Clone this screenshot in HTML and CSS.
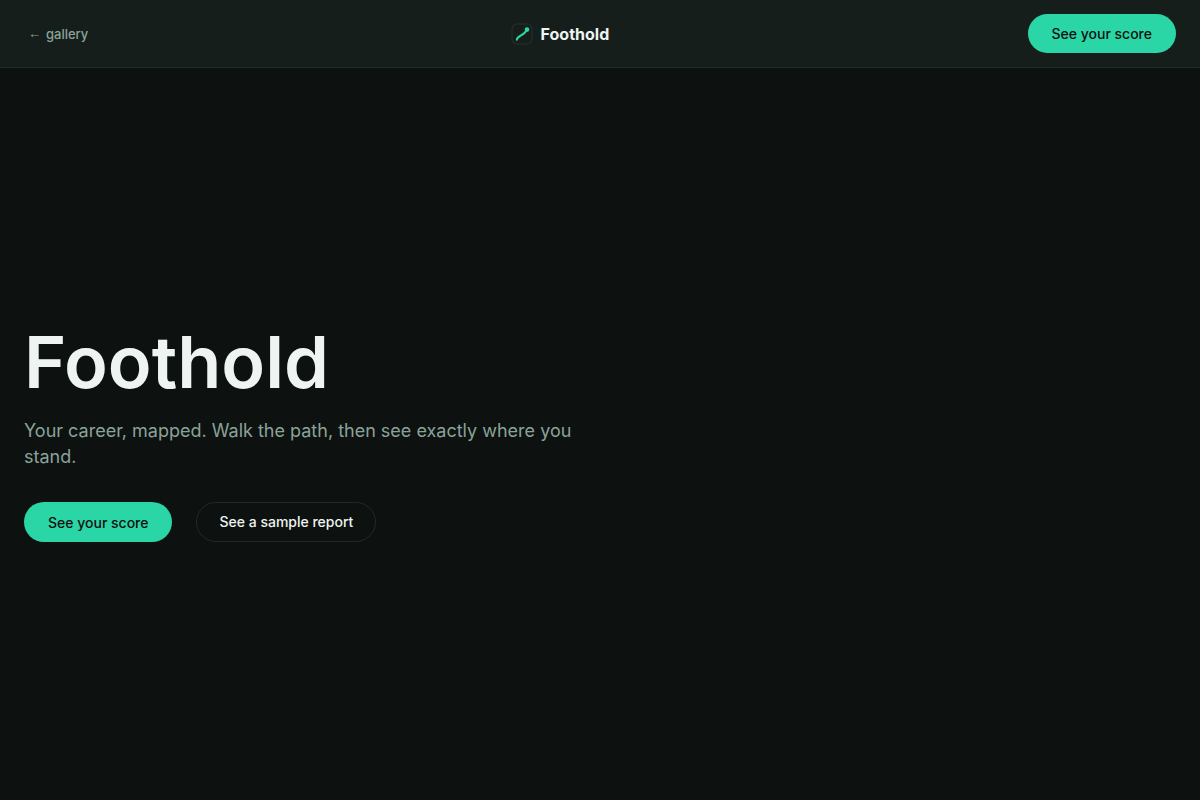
FILE: index.html
```
<!DOCTYPE html>
<html lang="en">
<head>
    <meta charset="UTF-8">
    <meta name="viewport" content="width=device-width, initial-scale=1.0">
    <title>Foothold</title>
    <link rel="stylesheet" href="styles.css">
</head>
<body>
    <header class="site-header">
        <a class="back-link" href="#gallery"><span class="back-arrow">←</span> gallery</a>
        <a class="brand" href="#top">
            <svg class="brand-mark" viewBox="0 0 22 22" fill="none" aria-hidden="true">
                <rect x="1" y="1" width="20" height="20" rx="5" stroke="#202b27" stroke-width="1.5"/>
                <path d="M5.8 16.8C6 12.5 13.8 12.5 15.4 7.2" stroke="#2bd6a6" stroke-width="2" stroke-linecap="round"/>
                <circle cx="16" cy="6.6" r="2.3" fill="#2bd6a6"/>
            </svg>
            <span>Foothold</span>
        </a>
        <button class="btn btn-primary" type="button">See your score</button>
    </header>

    <main class="hero" id="top">
        <h1 class="hero-title">Foothold</h1>
        <p class="hero-text">Your career, mapped. Walk the path, then see exactly where you stand.</p>
        <div class="hero-actions">
            <button class="btn btn-primary" type="button">See your score</button>
            <button class="btn btn-outline" type="button">See a sample report</button>
        </div>
    </main>
</body>
</html>
```
FILE: styles.css
```
:root {
    --background: #0d1110;
    --surface: #161e1b;
    --foreground: #eef4f1;
    --muted: #8aa39a;
    --primary: #2bd6a6;
    --border: #202b27;
}

* {
    margin: 0;
    padding: 0;
    box-sizing: border-box;
}

body {
    background: var(--background);
    color: var(--foreground);
    font-family: Inter, "Liberation Sans", sans-serif;
    display: flex;
    flex-direction: column;
    min-height: 100vh;
}

.site-header {
    display: flex;
    align-items: center;
    justify-content: space-between;
    padding: 14px 24px;
    background: var(--surface);
    border-bottom: 1px solid var(--border);
}

.back-link {
    display: flex;
    align-items: center;
    gap: 5px;
    padding: 4px;
    color: var(--muted);
    font-size: 13px;
    font-weight: 500;
    text-decoration: none;
}

.back-arrow {
    font-family: "Liberation Sans", sans-serif;
    font-weight: 400;
}

.brand {
    display: flex;
    align-items: center;
    gap: 8px;
    color: var(--foreground);
    font-size: 16px;
    font-weight: 700;
    text-decoration: none;
}

.brand-mark {
    width: 22px;
    height: 22px;
}

.btn {
    border: 0;
    border-radius: 999px;
    font-family: inherit;
    font-size: 14px;
    font-weight: 500;
    cursor: pointer;
}

.btn-primary {
    padding: 11px 24px;
    background: var(--primary);
    color: var(--background);
    line-height: 17px;
}

.btn-outline {
    padding: 10px 22px;
    border: 1px solid var(--border);
    background: transparent;
    color: var(--foreground);
    line-height: 18px;
}

.hero {
    flex: 1;
    display: flex;
    flex-direction: column;
    align-items: flex-start;
    justify-content: center;
    padding: 24px;
}

.hero-title {
    font-size: 72px;
    font-weight: 600;
    line-height: 72px;
}

.hero-text {
    max-width: 560px;
    margin: 20px 0 32px;
    color: var(--muted);
    font-size: 18px;
    line-height: 26px;
}

.hero-actions {
    display: flex;
    flex-wrap: wrap;
    gap: 24px;
}
```
